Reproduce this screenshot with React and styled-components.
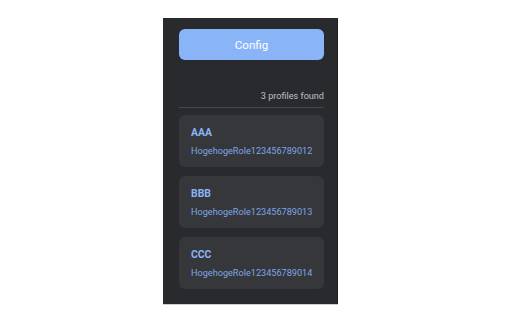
import React from "react";
import styled, { createGlobalStyle } from "styled-components";

const Global = createGlobalStyle`
  html, body { margin: 0; padding: 0; background: #ffffff; }
  body { font-family: Roboto, "Liberation Sans", Arial, sans-serif; }
  * { box-sizing: border-box; }
`;

const Page = styled.div`
  width: 512px;
  height: 320px;
  padding: 18px 0 0 163px;
`;

const Popup = styled.div`
  width: 175px;
  height: 286px;
  background: #292a2d;
  border-right: 1px solid #1c1c1e;
  box-shadow: 0 1px 0 #cfcfcf;
  padding: 11px 13px 0 16px;
  display: flex;
  flex-direction: column;
`;

const ConfigButton = styled.button`
  width: 145px;
  height: 31px;
  border: none;
  border-radius: 6px;
  background: #8ab4f8;
  color: #ffffff;
  font-family: Roboto, "Liberation Sans", Arial, sans-serif;
  font-size: 11.6px;
  padding: 0;
  cursor: pointer;
`;

const Summary = styled.div`
  margin-top: 31px;
  width: 145px;
  text-align: right;
  font-size: 9.1px;
  line-height: 10.6px;
  color: #bdc1c6;
  padding-bottom: 5.5px;
  border-bottom: 1px solid #45464a;
`;

const List = styled.div`
  display: flex;
  flex-direction: column;
  gap: 9px;
  margin-top: 7px;
  width: 145px;
`;

const Card = styled.div`
  height: 52px;
  border-radius: 6px;
  background: #36373b;
  padding: 12px 12px 0 12px;
  display: flex;
  flex-direction: column;
  gap: 7px;
`;

const Title = styled.div`
  font-size: 10.4px;
  line-height: 12.2px;
  font-weight: 700;
  color: #8ab4f8;
`;

const Role = styled.div`
  font-size: 9.15px;
  line-height: 10.6px;
  color: #7ea6e6;
`;

const profiles = [
  { name: "AAA", role: "HogehogeRole123456789012" },
  { name: "BBB", role: "HogehogeRole123456789013" },
  { name: "CCC", role: "HogehogeRole123456789014" },
];

export default function App() {
  return (
    <>
      <Global />
      <Page>
        <Popup>
          <ConfigButton>Config</ConfigButton>
          <Summary>{profiles.length} profiles found</Summary>
          <List>
            {profiles.map((p) => (
              <Card key={p.name}>
                <Title>{p.name}</Title>
                <Role>{p.role}</Role>
              </Card>
            ))}
          </List>
        </Popup>
      </Page>
    </>
  );
}
